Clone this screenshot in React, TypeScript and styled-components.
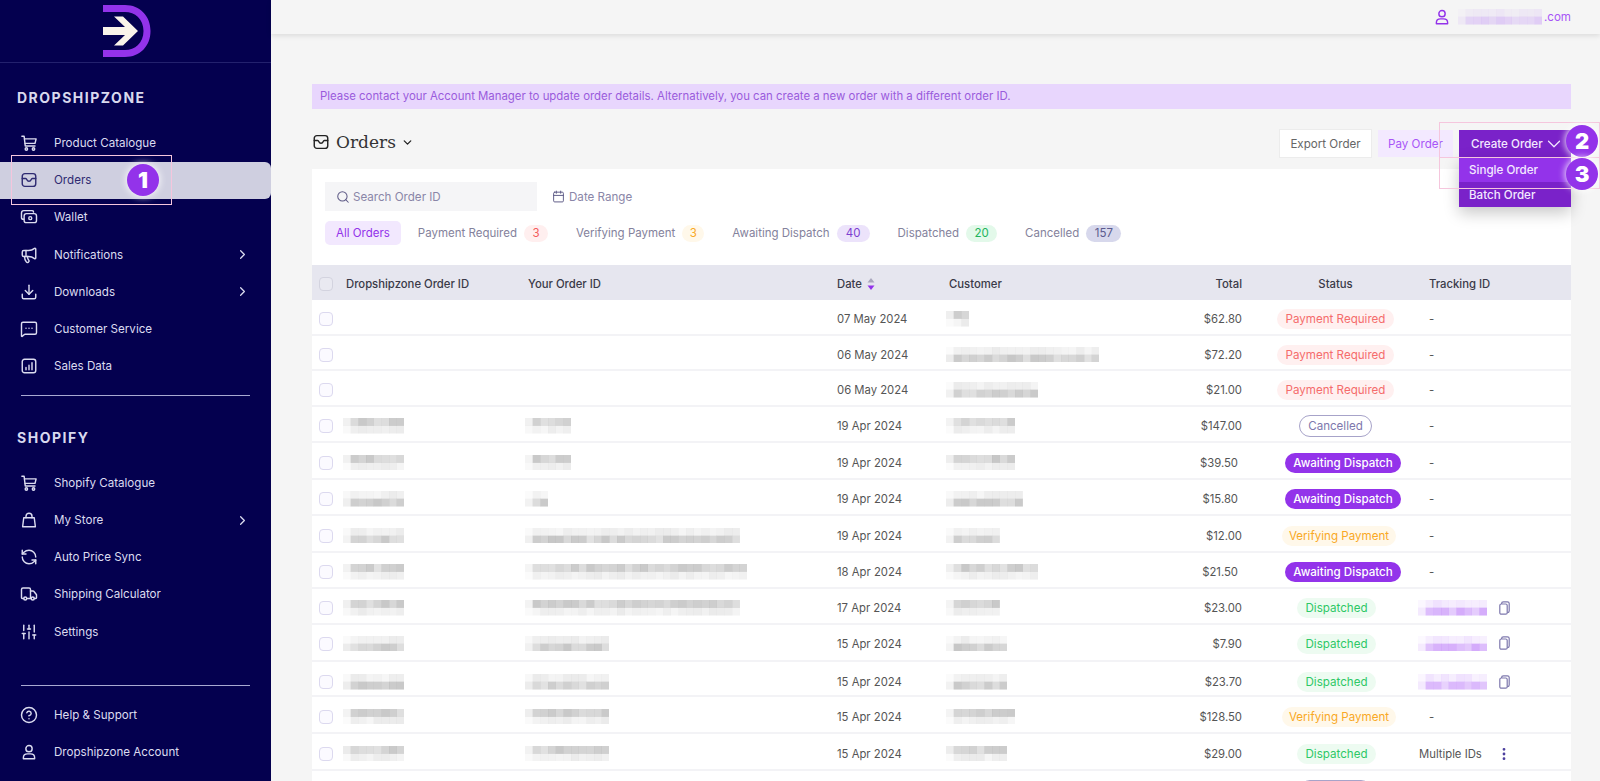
import React from 'react';
import styled, { createGlobalStyle, css } from 'styled-components';
import { ChevronRight, ChevronDown, Search, Download, RefreshCcw, Truck, SlidersVertical, CircleHelp, MessageSquareMore, Megaphone, Calendar, EllipsisVertical } from 'lucide-react';

const GlobalStyle = createGlobalStyle`
  html, body {
    margin: 0;
    height: 781px;
    overflow: hidden;
    background: #f5f5f5;
    font-family: Inter, "Noto Sans", sans-serif;
    font-size: 11.6px;
    color: #555;
  }
`;

type IconProps = { size?: number };

const NAV_ICON = 18;

const Glyph = ({ size = NAV_ICON, children }: IconProps & { children: React.ReactNode }) => (
  <svg width={size} height={size} viewBox="0 0 24 24" fill="none" stroke="currentColor" strokeWidth={1.9} strokeLinecap="round" strokeLinejoin="round">
    {children}
  </svg>
);

const CartIcon = () => (
  <Glyph>
    <path d="M2.5 3H5.5L7 16H20" />
    <path d="M6 6.5H21.5L20 12.5H6.8" />
    <circle cx="8.5" cy="20" r="1.6" />
    <circle cx="18" cy="20" r="1.6" />
  </Glyph>
);

const InboxIcon = ({ size }: IconProps) => (
  <Glyph size={size}>
    <rect x="3" y="3.5" width="18" height="17" rx="3.5" />
    <path d="M3 10H7.5C8.5 10 8.8 10.6 9.2 11.6C9.7 12.8 10.6 13.6 12 13.6C13.4 13.6 14.3 12.8 14.8 11.6C15.2 10.6 15.5 10 16.5 10H21" />
  </Glyph>
);

const WalletIcon = () => (
  <Glyph>
    <path d="M18 5.5V5.2C18 4 17 3.5 16 3.5H5C3.3 3.5 2 4.8 2 6.5V12.5C2 14 3 15 4.5 15H5" />
    <rect x="5.5" y="7.5" width="16.5" height="12" rx="3" />
    <circle cx="13.7" cy="13.5" r="2" />
  </Glyph>
);

const BagIcon = () => (
  <Glyph>
    <path d="M5 9H19L20.5 21H3.5Z" />
    <path d="M8 9V7C8 4.5 9.7 3 12 3C14.3 3 16 4.5 16 7V9" />
  </Glyph>
);

const ChartIcon = () => (
  <Glyph>
    <rect x="3" y="3" width="18" height="18" rx="3" />
    <path d="M8 17V14M12 17V11M16 17V7.5" />
  </Glyph>
);

const UserIcon = ({ size }: IconProps) => (
  <Glyph size={size}>
    <circle cx="12" cy="7.5" r="4.2" />
    <path d="M4.5 21V19.5C4.5 16.5 7 14.5 10 14.5H14C17 14.5 19.5 16.5 19.5 19.5V21Z" />
  </Glyph>
);

const SortIcon = () => (
  <svg width="8" height="14" viewBox="0 0 8 14">
    <path d="M4 1L7.5 5.5H0.5Z" fill="#a9a7bd" />
    <path d="M4 13L7.5 8.5H0.5Z" fill="#9333ea" />
  </svg>
);

const PagesIcon = () => (
  <svg width="11" height="14" viewBox="0 0 11 14" fill="none" stroke="currentColor" strokeWidth="1.2">
    <rect x="0.8" y="3" width="7.4" height="10.2" rx="1.5" />
    <path d="M2.6 3V2.5C2.6 1.5 3.4 0.8 4.4 0.8H8.4C9.4 0.8 10.2 1.5 10.2 2.5V10C10.2 11 9.5 11.7 8.2 11.7" />
  </svg>
);

const Logo = () => (
  <svg width="50" height="56" viewBox="0 0 50 56">
    <path d="M0 3H22C37 3 47.5 14 47.5 29C47.5 44 37 55 22 55H0V48H22C32 48 40.5 41 40.5 29C40.5 17 32 10 22 10H0Z" fill="#9333ea" />
    <path d="M11 14.5H20L35 29L20 43.5H11L22 33H0V25H22Z" fill="#f9f3ea" />
  </svg>
);

// deterministic fake of the pixelated redaction blocks
const shade = (seed: number, i: number) => {
  const v = Math.sin(seed * 12.9898 + i * 78.233) * 43758.5453;
  return v - Math.floor(v);
};

const CELL = 7.67;

const Mosaic = ({ width, seed, strong = 'top', tint = '#8f8f8f', pale }: { width: number; seed: number; strong?: 'top' | 'bottom'; tint?: string; pale?: boolean }) => {
  const cols = Math.round(width / CELL);
  const cells = [];
  for (let c = 0; c < cols; c++) {
    for (let r = 0; r < 2; r++) {
      const isStrong = (r === 0) === (strong === 'top');
      const edge = c === 0 ? 0.35 : 1;
      const base = isStrong ? 0.26 + shade(seed, c) * 0.24 : 0.08 + shade(seed + 7, c) * 0.1;
      cells.push(<rect key={`${c}-${r}`} x={c * CELL} y={r * CELL} width={CELL + 0.2} height={CELL + 0.2} fill={tint} opacity={base * edge * (pale ? 0.7 : 1)} />);
    }
  }
  return (
    <MosaicSvg width={cols * CELL} height={CELL * 2}>
      {cells}
    </MosaicSvg>
  );
};

type Status = 'required' | 'cancelled' | 'awaiting' | 'verifying' | 'dispatched';

const statusText: Record<Status, string> = {
  required: 'Payment Required',
  cancelled: 'Cancelled',
  awaiting: 'Awaiting Dispatch',
  verifying: 'Verifying Payment',
  dispatched: 'Dispatched',
};

type Order = {
  h: number;
  drop?: number;
  id?: number;
  yours?: number;
  cust: number;
  date: string;
  total: string;
  status: Status;
  track?: 'dash' | 'id' | 'multi';
  strong?: 'top' | 'bottom';
};

const orders: Order[] = [
  { h: 36, cust: 23, date: '07 May 2024', total: '$62.80', status: 'required', track: 'dash' },
  { h: 35, cust: 153, date: '06 May 2024', total: '$72.20', status: 'required', track: 'dash', strong: 'bottom' },
  { h: 36, cust: 92, date: '06 May 2024', total: '$21.00', status: 'required', track: 'dash', strong: 'bottom' },
  { h: 36, id: 61, yours: 46, cust: 69, date: '19 Apr 2024', total: '$147.00', status: 'cancelled', track: 'dash' },
  { h: 37, id: 61, yours: 46, cust: 69, date: '19 Apr 2024', total: '$39.50', status: 'awaiting', track: 'dash' },
  { h: 36, id: 61, yours: 23, cust: 77, date: '19 Apr 2024', total: '$15.80', status: 'awaiting', track: 'dash', strong: 'bottom' },
  { h: 37, id: 61, yours: 214, cust: 54, date: '19 Apr 2024', total: '$12.00', status: 'verifying', track: 'dash', strong: 'bottom' },
  { h: 36, id: 61, yours: 221, cust: 92, date: '18 Apr 2024', total: '$21.50', status: 'awaiting', track: 'dash' },
  { h: 36, id: 61, yours: 214, cust: 54, date: '17 Apr 2024', total: '$23.00', status: 'dispatched', track: 'id' },
  { h: 37, drop: 2, id: 61, yours: 84, cust: 61, date: '15 Apr 2024', total: '$7.90', status: 'dispatched', track: 'id', strong: 'bottom' },
  { h: 35, drop: 7, id: 61, yours: 84, cust: 61, date: '15 Apr 2024', total: '$23.70', status: 'dispatched', track: 'id', strong: 'bottom' },
  { h: 37, id: 61, yours: 84, cust: 69, date: '15 Apr 2024', total: '$128.50', status: 'verifying', track: 'dash' },
  { h: 37, id: 61, yours: 84, cust: 61, date: '15 Apr 2024', total: '$29.00', status: 'dispatched', track: 'multi' },
];

const lucideProps = { size: NAV_ICON, strokeWidth: 1.9 };

const mainNav = [
  { label: 'Product Catalogue', icon: <CartIcon /> },
  { label: 'Orders', icon: <InboxIcon />, active: true },
  { label: 'Wallet', icon: <WalletIcon /> },
  { label: 'Notifications', icon: <Megaphone {...lucideProps} />, more: true },
  { label: 'Downloads', icon: <Download {...lucideProps} />, more: true },
  { label: 'Customer Service', icon: <MessageSquareMore {...lucideProps} /> },
  { label: 'Sales Data', icon: <ChartIcon /> },
];

const shopNav = [
  { label: 'Shopify Catalogue', icon: <CartIcon /> },
  { label: 'My Store', icon: <BagIcon />, more: true },
  { label: 'Auto Price Sync', icon: <RefreshCcw {...lucideProps} /> },
  { label: 'Shipping Calculator', icon: <Truck {...lucideProps} /> },
  { label: 'Settings', icon: <SlidersVertical {...lucideProps} /> },
];

const footNav = [
  { label: 'Help & Support', icon: <CircleHelp {...lucideProps} /> },
  { label: 'Dropshipzone Account', icon: <UserIcon /> },
];

type NavEntry = { label: string; icon: React.ReactNode; active?: boolean; more?: boolean };

const NavList = ({ items }: { items: NavEntry[] }) => (
  <nav>
    {items.map((item) => (
      <NavItem key={item.label} $active={item.active}>
        <NavIcon>{item.icon}</NavIcon>
        {item.label}
        {item.more && (
          <NavMore>
            <ChevronRight size={15} strokeWidth={2} />
          </NavMore>
        )}
        {item.active && (
          <>
            <CalloutBox />
            <SidebarStep>1</SidebarStep>
          </>
        )}
      </NavItem>
    ))}
  </nav>
);

const tabs = [
  { label: 'Payment Required', count: '3', kind: 'required' as Status, w: 24 },
  { label: 'Verifying Payment', count: '3', kind: 'verifying' as Status, w: 22 },
  { label: 'Awaiting Dispatch', count: '40', kind: 'awaiting' as Status, w: 33 },
  { label: 'Dispatched', count: '20', kind: 'dispatched' as Status, w: 31 },
  { label: 'Cancelled', count: '157', kind: 'cancelled' as Status, w: 35 },
];

export default function App() {
  return (
    <Page>
      <GlobalStyle />
      <Sidebar>
        <LogoBar>
          <Logo />
        </LogoBar>
        <SectionTitle>DROPSHIPZONE</SectionTitle>
        <NavList items={mainNav} />
        <Rule />
        <SectionTitle $gap>SHOPIFY</SectionTitle>
        <NavList items={shopNav} />
        <Rule $lower />
        <NavList items={footNav} />
      </Sidebar>
      <Main>
        <TopBar>
          <UserIcon size={18} />
          <Email>
            <Mosaic width={84} seed={31} tint="#b57cf5" strong="bottom" pale />
            <EmailEnd>.com</EmailEnd>
          </Email>
        </TopBar>
        <Content>
          <Banner>Please contact your Account Manager to update order details. Alternatively, you can create a new order with a different order ID.</Banner>
          <TitleRow>
            <PageTitle>
              <InboxIcon size={18} />
              <h1>Orders</h1>
              <ChevronDown size={13} strokeWidth={2.4} />
            </PageTitle>
            <Actions>
              <ExportButton>Export Order</ExportButton>
              <PayButton>Pay Order</PayButton>
              <CreateWrap>
                <CreateButton>
                  Create Order
                  <ChevronDown size={22} strokeWidth={1.3} />
                </CreateButton>
                <Dropdown>
                  <DropItem $hover>Single Order</DropItem>
                  <DropItem>Batch Order</DropItem>
                </Dropdown>
                <ActionBox />
                <SingleBox />
                <ActionStep>2</ActionStep>
                <SingleStep>3</SingleStep>
              </CreateWrap>
            </Actions>
          </TitleRow>
          <Panel>
            <Tools>
              <SearchBox>
                <Search size={14} strokeWidth={1.8} />
                Search Order ID
              </SearchBox>
              <DateRange>
                <Calendar size={13} strokeWidth={1.8} />
                Date Range
              </DateRange>
            </Tools>
            <Tabs>
              <Tab $active>All Orders</Tab>
              {tabs.map((t) => (
                <Tab key={t.label}>
                  {t.label}
                  <Count $kind={t.kind} $w={t.w}>
                    {t.count}
                  </Count>
                </Tab>
              ))}
            </Tabs>
            <HeadRow>
              <Check $head />
              <span>Dropshipzone Order ID</span>
              <span>Your Order ID</span>
              <DateHead>
                Date <SortIcon />
              </DateHead>
              <span>Customer</span>
              <RightCell>Total</RightCell>
              <CenterCell>Status</CenterCell>
              <span>Tracking ID</span>
            </HeadRow>
            {orders.map((o, i) => (
              <Row key={i} $h={o.h} $drop={o.drop}>
                <Check />
                <span>{o.id && <Mosaic width={o.id} seed={i + 1} strong={o.strong} />}</span>
                <span>{o.yours && <Mosaic width={o.yours} seed={i + 20} strong={o.strong} />}</span>
                <span>{o.date}</span>
                <span>
                  <Mosaic width={o.cust} seed={i + 40} strong={o.strong} />
                </span>
                <TotalCell $status={o.status}>{o.total}</TotalCell>
                <CenterCell>
                  <Pill $status={o.status}>{statusText[o.status]}</Pill>
                </CenterCell>
                <TrackCell>
                  {o.track === 'dash' && '-'}
                  {o.track === 'id' && (
                    <TrackId>
                      <Mosaic width={69} seed={i + 60} strong="bottom" tint="#a855f7" />
                      <CopyIcon>
                        <PagesIcon />
                      </CopyIcon>
                    </TrackId>
                  )}
                  {o.track === 'multi' && (
                    <MultiIds>
                      Multiple IDs
                      <KebabIcon>
                        <EllipsisVertical size={16} strokeWidth={2.2} />
                      </KebabIcon>
                    </MultiIds>
                  )}
                </TrackCell>
              </Row>
            ))}
            <Row $h={37}>
              <Check />
              <span>
                <Mosaic width={61} seed={70} />
              </span>
              <span>
                <Mosaic width={84} seed={71} />
              </span>
              <span />
              <span>
                <Mosaic width={69} seed={72} />
              </span>
              <span />
              <CenterCell>
                <CutOffPill $status="cancelled" />
              </CenterCell>
              <span />
            </Row>
          </Panel>
        </Content>
      </Main>
    </Page>
  );
}

const Page = styled.div`
  display: flex;
  width: 1600px;
  height: 781px;
  overflow: hidden;
`;

const Sidebar = styled.aside`
  flex: 0 0 271px;
  background: #04004f;
  color: #dcdcf0;
`;

const LogoBar = styled.div`
  height: 63px;
  display: flex;
  justify-content: center;
  align-items: flex-start;
  padding-top: 2px;
  padding-right: 16px;
  box-sizing: border-box;
  border-bottom: 1px solid #23216d;
  margin-bottom: 25px;
`;

const SectionTitle = styled.div<{ $gap?: boolean }>`
  height: 20px;
  line-height: 20px;
  margin: ${(p) => (p.$gap ? '32px' : '0')} 0 16.5px 17px;
  font-size: 14px;
  font-weight: 700;
  letter-spacing: 1.5px;
  color: #d9d9ee;
`;

const NavItem = styled.div<{ $active?: boolean }>`
  position: relative;
  display: flex;
  align-items: center;
  height: 37.2px;
  padding-left: 20px;
  border-radius: 0 6px 6px 0;
  ${(p) =>
    p.$active &&
    css`
      background: #cfcfe0;
      color: #2f2b72;
    `}
`;

const NavIcon = styled.span`
  display: flex;
  width: 34px;
`;

const NavMore = styled.span`
  display: flex;
  position: absolute;
  left: 235px;
`;

const CalloutBox = styled.div`
  position: absolute;
  left: 11px;
  top: -7px;
  width: 161px;
  height: 50px;
  border: 1px solid #f5c6dd;
  box-sizing: border-box;
`;

const Step = styled.div`
  position: absolute;
  width: 32px;
  height: 32px;
  border-radius: 50%;
  background: #9333ea;
  color: #fff;
  font-size: 22px;
  font-weight: 900;
  display: flex;
  align-items: center;
  justify-content: center;
  box-shadow: 0 0 7px 1px rgba(255, 255, 255, 0.85);
`;

const SidebarStep = styled(Step)`
  left: 127px;
  top: 2px;
`;

const Rule = styled.div<{ $lower?: boolean }>`
  height: 1px;
  background: #a9a9d2;
  margin: ${(p) => (p.$lower ? '35px 21px 10px' : '10px 21px 0')};
`;

const Main = styled.main`
  flex: 1;
  display: flex;
  flex-direction: column;
  min-width: 0;
`;

const TopBar = styled.header`
  height: 34px;
  flex: none;
  display: flex;
  align-items: center;
  justify-content: flex-end;
  gap: 10px;
  padding-right: 29px;
  color: #9333ea;
  background: #f5f5f5;
  box-shadow: 0 2px 5px rgba(0, 0, 0, 0.1);
`;

const Email = styled.div`
  display: flex;
  align-items: center;
  color: #a855f7;
`;

const EmailEnd = styled.span`
  margin-left: 2px;
`;

const Content = styled.div`
  flex: 1;
  display: flex;
  flex-direction: column;
  padding: 50px 29px 0 41px;
  min-height: 0;
`;

const Banner = styled.div`
  height: 25px;
  flex: none;
  line-height: 25px;
  padding-left: 8px;
  background: #e8d6fd;
  color: #9a5bdc;
  font-size: 11.4px;
`;

const TitleRow = styled.div`
  height: 60px;
  flex: none;
  display: flex;
  justify-content: space-between;
  align-items: flex-start;
`;

const PageTitle = styled.div`
  display: flex;
  align-items: center;
  height: 24px;
  margin-top: 21px;
  color: #222;
  svg:first-child {
    margin: 0 6px 0 0;
  }
  h1 {
    margin: 0 5px 0 0;
    font: 400 17px 'DejaVu Serif', 'Liberation Serif', serif;
    color: #333;
  }
`;

const Actions = styled.div`
  display: flex;
  align-items: flex-start;
  gap: 6px;
  margin-top: 20px;
`;

const ExportButton = styled.div`
  width: 93px;
  height: 29px;
  box-sizing: border-box;
  border: 1px solid #ececec;
  background: #fff;
  color: #666;
  display: flex;
  align-items: center;
  justify-content: center;
`;

const PayButton = styled.div`
  width: 75px;
  height: 27px;
  margin-top: 1px;
  background: #f3e9ff;
  color: #a855f7;
  display: flex;
  align-items: center;
  justify-content: center;
`;

const CreateWrap = styled.div`
  position: relative;
  width: 112px;
  margin-top: 1px;
`;

const CreateButton = styled.div`
  height: 27px;
  background: #7a22c9;
  color: #f3e9ff;
  display: flex;
  align-items: center;
  padding-left: 12px;
  font-weight: 500;
`;

const Dropdown = styled.div`
  position: absolute;
  top: 27px;
  left: 0;
  right: 0;
  background: #7a22c9;
  box-shadow: 0 6px 16px rgba(0, 0, 0, 0.22);
`;

const DropItem = styled.div<{ $hover?: boolean }>`
  height: 25px;
  line-height: 27px;
  padding-left: 10px;
  color: #f3e9ff;
  font-weight: 500;
  background: ${(p) => (p.$hover ? '#9333ea' : 'transparent')};
`;

const ActionBox = styled.div`
  position: absolute;
  left: -20px;
  top: -8px;
  width: 161px;
  height: 36px;
  border: 1px solid #f5c6dd;
  box-sizing: border-box;
`;

const SingleBox = styled(ActionBox)`
  top: 27px;
  height: 32px;
  border-top: 0;
`;

const ActionStep = styled(Step)`
  left: 107px;
  top: -5px;
`;

const SingleStep = styled(Step)`
  left: 107px;
  top: 28px;
`;

const Panel = styled.section`
  flex: 1;
  background: #fff;
  padding-top: 13px;
  min-height: 0;
`;

const Tools = styled.div`
  display: flex;
  align-items: center;
  gap: 15px;
  padding-left: 13px;
`;

const SearchBox = styled.div`
  width: 212px;
  height: 29px;
  box-sizing: border-box;
  padding-left: 11px;
  background: #f5f5f7;
  color: #8a86a8;
  display: flex;
  align-items: center;
  gap: 3px;
  svg {
    color: #5f5b87;
  }
`;

const DateRange = styled.div`
  display: flex;
  align-items: center;
  gap: 4px;
  color: #8a86a8;
  svg {
    color: #5f5b87;
  }
`;

const Tabs = styled.div`
  display: flex;
  gap: 6px;
  margin-top: 10px;
  padding-left: 13px;
  font-size: 11.5px;
`;

const Tab = styled.div<{ $active?: boolean }>`
  height: 24px;
  display: flex;
  align-items: center;
  gap: 7px;
  padding: 0 11px;
  border-radius: 5px;
  color: ${(p) => (p.$active ? '#9333ea' : '#84829c')};
  background: ${(p) => (p.$active ? '#f2e8fe' : 'transparent')};
`;

const countColors: Record<Status, string> = {
  required: 'background: #ffefef; color: #f45b5b;',
  verifying: 'background: #fff8ea; color: #f9a825;',
  awaiting: 'background: #ece3fb; color: #7e3fd0;',
  dispatched: 'background: #e3f9ea; color: #22b45c;',
  cancelled: 'background: #d7d8ec; color: #5b5a8e;',
};

const Count = styled.span<{ $kind: Status; $w: number }>`
  width: ${(p) => p.$w}px;
  height: 17px;
  box-sizing: border-box;
  border-radius: 9px;
  display: flex;
  align-items: center;
  justify-content: center;
  ${(p) => countColors[p.$kind]}
`;

const columns = css`
  display: grid;
  grid-template-columns: 34px 182px 309px 112px 190px 103px 187px 1fr;
  align-items: center;
  font-size: 11.3px;
`;

const HeadRow = styled.div`
  ${columns}
  height: 35px;
  box-sizing: border-box;
  padding-top: 2px;
  margin-top: 20px;
  background: #e6e6ef;
  color: #3a3a48;
  font-weight: 500;
`;

const Row = styled.div<{ $h: number; $drop?: number }>`
  ${columns}
  height: ${(p) => p.$h}px;
  box-sizing: border-box;
  padding-top: ${(p) => p.$drop ?? 4}px;
  border-bottom: 2px solid #f3f3f6;
`;

const Check = styled.span<{ $head?: boolean }>`
  width: 14px;
  height: 14px;
  margin-left: 7px;
  box-sizing: border-box;
  border-radius: 4px;
  border: 1.5px solid ${(p) => (p.$head ? '#d3d3df' : '#dcd9ef')};
  background: ${(p) => (p.$head ? '#e9e9f1' : '#fbfaff')};
`;

const MosaicSvg = styled.svg`
  display: block;
  margin-left: -3px;
`;

const DateHead = styled.span`
  display: flex;
  align-items: center;
  gap: 5px;
`;

const RightCell = styled.span`
  text-align: right;
`;

const TotalCell = styled(RightCell)<{ $status: Status }>`
  padding-right: ${(p) => (p.$status === 'awaiting' ? '4px' : '0')};
`;

const CenterCell = styled.span`
  display: flex;
  justify-content: center;
`;

const pillStyles: Record<Status, ReturnType<typeof css>> = {
  required: css`
    background: #fff0f0;
    color: #f56c6c;
  `,
  cancelled: css`
    height: 22px;
    background: #fff;
    color: #7e78ad;
    border: 1px solid #a7a3c9;
  `,
  awaiting: css`
    background: #9333ea;
    color: #fff;
    font-weight: 500;
    margin-left: 15px;
  `,
  verifying: css`
    background: #fff8ea;
    color: #f9a825;
    padding: 0 7px;
    margin-left: 7px;
  `,
  dispatched: css`
    background: #edfbf1;
    color: #2ec866;
    margin-left: 2px;
  `,
};

const Pill = styled.span<{ $status: Status }>`
  height: 20px;
  box-sizing: border-box;
  padding: 0 8.5px;
  border-radius: 11px;
  display: flex;
  align-items: center;
  white-space: nowrap;
  font-size: 11.6px;
  ${(p) => pillStyles[p.$status]}
`;

const CutOffPill = styled(Pill)`
  width: 73px;
`;

const TrackCell = styled.span`
  display: flex;
  align-items: center;
`;

const TrackId = styled.span`
  display: flex;
  align-items: center;
  margin-left: -8px;
`;

const MultiIds = styled(TrackId)`
  margin-left: -10px;
`;

const CopyIcon = styled.span`
  display: flex;
  margin-left: 12px;
  color: #7e78ad;
`;

const KebabIcon = styled.span`
  display: flex;
  margin-left: 14px;
  color: #4c3f9e;
`;
